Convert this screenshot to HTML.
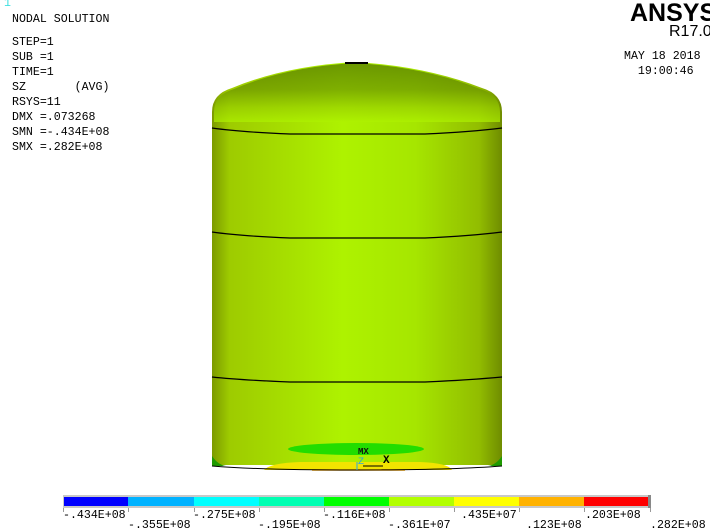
<!DOCTYPE html>
<html><head><meta charset="utf-8"><style>
html,body{margin:0;padding:0;background:#fff;width:710px;height:529px;overflow:hidden;position:relative}
.t{position:absolute;font-family:"Liberation Mono",monospace;font-size:11.6px;color:#000;white-space:pre;line-height:15px}
.l{position:absolute;font-family:"Liberation Mono",monospace;font-size:11.6px;color:#000;white-space:pre;line-height:11px}
</style></head><body>
<svg width="710" height="529" style="position:absolute;left:0;top:0">
<defs>
<linearGradient id="h" x1="0" x2="1" y1="0" y2="0">
<stop offset="0" stop-color="#7c9a00"/><stop offset="0.06" stop-color="#9ecb00"/>
<stop offset="0.45" stop-color="#aef200"/><stop offset="0.7" stop-color="#a6e600"/>
<stop offset="0.92" stop-color="#92bd00"/><stop offset="1" stop-color="#6f8c00"/>
</linearGradient>
<linearGradient id="d" x1="0" x2="0" y1="0" y2="1">
<stop offset="0" stop-color="#4f7200"/><stop offset="0.45" stop-color="#6a9300"/>
<stop offset="0.75" stop-color="#98cf00"/><stop offset="1" stop-color="#aef200"/>
</linearGradient>
</defs>
<path d="M212 465 L212 112 Q212 94 232 88 Q285 66 355 62 Q425 66 482 88 Q502 94 502 112 L502 465 Z" fill="url(#h)"/>
<path d="M214 112 Q214 95 234 89 Q285 67 355 63 Q425 67 480 89 Q500 95 500 112 L500 122 L214 122 Z" fill="url(#d)" opacity="0.7"/>
<path d="M345 63 L368 63" stroke="#000" stroke-width="2"/>
<path d="M212 128 Q240 132 290 134 L425 134 Q470 132 502 128" stroke="#000" fill="none" stroke-width="1.2"/>
<path d="M212 232 Q240 236 290 238 L425 238 Q470 236 502 232" stroke="#000" fill="none" stroke-width="1.2"/>
<path d="M212 377 Q240 380 290 382 L425 382 Q470 380 502 377" stroke="#000" fill="none" stroke-width="1.2"/>
<path d="M212 456 Q218 465 226 466 L212 466 Z" fill="#1e9a00"/>
<path d="M502 456 Q496 465 488 466 L502 466 Z" fill="#1e9a00"/>
<ellipse cx="356" cy="449" rx="68" ry="6" fill="#22dd00"/>
<path d="M264 470 Q270 463 300 462 L420 462 Q448 463 452 470 Z" fill="#f2e400"/>
<path d="M312 470 L405 470" stroke="#f0a000" stroke-width="1.5"/>
<path d="M212 466 Q260 470 356 470 Q450 470 502 466" stroke="#000" fill="none"/>
<path d="M363 466 L383 466" stroke="#000"/>
<text x="358" y="454" font-family="Liberation Mono" font-size="9" font-weight="bold" fill="#111">MX</text>
<text x="358" y="464" font-family="Liberation Mono" font-size="10" fill="#29a8e0">Z</text>
<path d="M357 462 L357 470" stroke="#29a8e0"/>
<text x="383" y="463" font-family="Liberation Mono" font-size="11" font-weight="bold" fill="#000">X</text>
<rect x="63" y="495" width="588" height="13" fill="#c8c8c8"/>
<rect x="648" y="495" width="3" height="13" fill="#888"/>
<rect x="64" y="497" width="64" height="9" fill="#0000ff"/>
<rect x="128" y="497" width="66" height="9" fill="#00b2ff"/>
<rect x="194" y="497" width="65" height="9" fill="#00ffff"/>
<rect x="259" y="497" width="65" height="9" fill="#00ffb2"/>
<rect x="324" y="497" width="65" height="9" fill="#00ff00"/>
<rect x="389" y="497" width="65" height="9" fill="#b2ff00"/>
<rect x="454" y="497" width="65" height="9" fill="#ffff00"/>
<rect x="519" y="497" width="65" height="9" fill="#ffb200"/>
<rect x="584" y="497" width="64" height="9" fill="#ff0000"/>
<g stroke="#999"><path d="M63.5 508 V512 M128.5 508 V512 M194.5 508 V512 M259.5 508 V512 M324.5 508 V512 M389.5 508 V512 M454.5 508 V512 M519.5 508 V512 M584.5 508 V512 M650.5 508 V512"/></g>
</svg>
<div class="t" style="left:4px;top:-4px;color:#40e0e0">1</div>
<div class="t" style="left:12px;top:12px">NODAL SOLUTION</div>
<div class="t" style="left:12px;top:35px">STEP=1
SUB =1
TIME=1
SZ       (AVG)
RSYS=11
DMX =.073268
SMN =-.434E+08
SMX =.282E+08</div>
<div style="position:absolute;left:630px;top:-2px;font-family:'Liberation Sans',sans-serif;font-weight:bold;font-size:25px;line-height:30px;white-space:nowrap">ANSYS</div>
<div style="position:absolute;left:669px;top:22px;font-family:'Liberation Sans',sans-serif;font-size:16px;line-height:20px;white-space:nowrap">R17.0</div>
<div class="t" style="left:624px;top:49px">MAY 18 2018
  19:00:46</div>
<div class="l" style="left:63px;top:510px">-.434E+08</div>
<div class="l" style="left:193px;top:510px">-.275E+08</div>
<div class="l" style="left:323px;top:510px">-.116E+08</div>
<div class="l" style="left:461px;top:510px">.435E+07</div>
<div class="l" style="left:585px;top:510px">.203E+08</div>
<div class="l" style="left:128px;top:520px">-.355E+08</div>
<div class="l" style="left:258px;top:520px">-.195E+08</div>
<div class="l" style="left:388px;top:520px">-.361E+07</div>
<div class="l" style="left:526px;top:520px">.123E+08</div>
<div class="l" style="left:650px;top:520px">.282E+08</div>
</body></html>
